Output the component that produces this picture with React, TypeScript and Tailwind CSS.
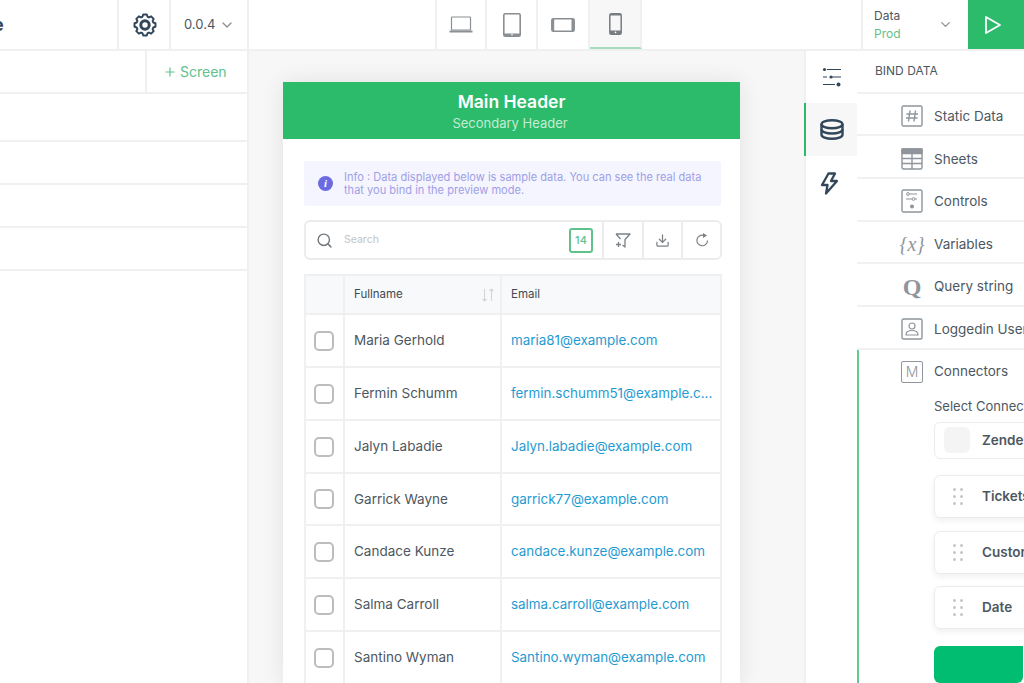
import { ChevronDown, Download, Plus, Search } from "lucide-react";
import type { ReactNode } from "react";

const font = { fontFamily: "Inter, 'Liberation Sans', sans-serif" };

const people = [
  { name: "Maria Gerhold", email: "maria81@example.com", h: "h-[53px]" },
  { name: "Fermin Schumm", email: "fermin.schumm51@example.c...", h: "h-[53px]" },
  { name: "Jalyn Labadie", email: "Jalyn.labadie@example.com", h: "h-[53px]" },
  { name: "Garrick Wayne", email: "garrick77@example.com", h: "h-[52px]" },
  { name: "Candace Kunze", email: "candace.kunze@example.com", h: "h-[53px]" },
  { name: "Salma Carroll", email: "salma.carroll@example.com", h: "h-[53px]" },
  { name: "Santino Wyman", email: "Santino.wyman@example.com", h: "h-[53px]" },
];

// 8 tooth cog outline
function gearPath() {
  const pts: string[] = [];
  for (let i = 0; i < 8; i++) {
    const a = (i * Math.PI) / 4;
    for (const [r, d] of [[8.6, -0.3], [10.6, -0.17], [10.6, 0.17], [8.6, 0.3]]) {
      pts.push(`${(12 + r * Math.cos(a + d)).toFixed(2)} ${(12 + r * Math.sin(a + d)).toFixed(2)}`);
    }
  }
  return `M${pts.join("L")}Z`;
}

function Gear() {
  return (
    <svg width="24" height="24" viewBox="0 0 24 24" fill="none" stroke="#33475b" strokeLinejoin="round">
      <path d={gearPath()} strokeWidth="2" />
      <circle cx="12" cy="12" r="4.2" strokeWidth="3" />
    </svg>
  );
}

function Laptop() {
  return (
    <svg width="24" height="20" viewBox="0 0 24 20" fill="none" stroke="#8a8f94">
      <rect x="2.5" y="2" width="19" height="13" rx="0.5" strokeWidth="1.2" />
      <path d="M0.5 16.5h23" strokeWidth="2" />
    </svg>
  );
}

function Tablet() {
  return (
    <svg width="18" height="24" viewBox="0 0 18 24" fill="none">
      <rect x="0.8" y="0.8" width="16.4" height="22.4" rx="1.5" stroke="#8a8f94" strokeWidth="1.6" />
      <path d="M1 20.5h16V23H1z" fill="#8a8f94" />
      <circle cx="9" cy="21.7" r="0.8" fill="#fff" />
    </svg>
  );
}

function Wide() {
  return (
    <svg width="24" height="14" viewBox="0 0 24 14" fill="none">
      <rect x="0.8" y="0.8" width="22.4" height="12.4" rx="1.5" stroke="#8a8f94" strokeWidth="1.5" />
      <path d="M1 1h2.2v12H1zM20.5 1H23v12h-2.5z" fill="#8a8f94" />
    </svg>
  );
}

function Phone() {
  return (
    <svg width="13" height="22" viewBox="0 0 13 22" fill="none">
      <rect x="0.8" y="0.8" width="11.4" height="20.4" rx="1.5" stroke="#777c82" strokeWidth="1.5" />
      <path d="M1 1h11v1.5H1zM1 17.5h11V21H1z" fill="#777c82" />
      <circle cx="6.5" cy="19.3" r="0.9" fill="#fff" />
    </svg>
  );
}

function Sliders() {
  return (
    <svg width="20" height="20" viewBox="0 0 20 20" fill="none" stroke="#33475b" strokeWidth="1.2">
      <path d="M5 2.5h14M1 10h4M9 10h10M1 17.5h12" />
      <circle cx="2.5" cy="2.5" r="1.6" fill="#33475b" stroke="none" />
      <circle cx="9" cy="10" r="1.6" fill="#33475b" stroke="none" />
      <circle cx="16.5" cy="17.5" r="2" fill="#33475b" stroke="none" />
    </svg>
  );
}

function Db() {
  return (
    <svg width="24" height="21" viewBox="0 0 24 21" fill="none" stroke="#33475b" strokeWidth="2.4">
      <ellipse cx="12" cy="5.2" rx="10.5" ry="4" />
      <path d="M1.5 5.2v10.6c0 2.2 4.7 4 10.5 4s10.5-1.8 10.5-4V5.2" />
      <path d="M1.5 10.5c0 2.2 4.7 4 10.5 4s10.5-1.8 10.5-4" />
    </svg>
  );
}

function Bolt() {
  return (
    <svg width="19" height="23" viewBox="0 0 19 23" fill="none" stroke="#33475b" strokeWidth="2.3" strokeLinejoin="round">
      <path d="M8.5 1.5 2 13h5.5L6 21.5 17 9h-6l4-7.5z" />
    </svg>
  );
}

function Run() {
  return (
    <svg width="18" height="20" viewBox="0 0 18 20" fill="none" stroke="#fff" strokeWidth="1.8" strokeLinejoin="round">
      <path d="M2 2v16l14-8z" />
    </svg>
  );
}

function Funnel() {
  return (
    <svg width="16" height="15" viewBox="0 0 16 15" fill="none" stroke="#7b8186" strokeWidth="1.3" strokeLinejoin="round">
      <path d="M1 1h14l-5 5.5V14L7.5 12" />
      <path d="M1 1l4.5 5" />
      <path d="M3.5 9v5M1 11.5h5" />
    </svg>
  );
}

function Refresh() {
  return (
    <svg width="14" height="14" viewBox="0 0 14 14" fill="none" stroke="#7b8186" strokeWidth="1.2">
      <path d="M8.5 2.3A5.3 5.3 0 1 0 12.5 7.5" />
      <path d="M8 0l4 2.5L8 5z" fill="#7b8186" stroke="none" />
    </svg>
  );
}

function SortArrows() {
  return (
    <svg width="14" height="14" viewBox="0 0 14 14" fill="none" stroke="#d3d5d7" strokeWidth="1.1">
      <path d="M3.5 1v12M1.5 11l2 2 2-2M10.5 13V1M8.5 3l2-2 2 2" />
    </svg>
  );
}

function HashIcon() {
  return (
    <svg width="22" height="22" viewBox="0 0 22 22" fill="none" stroke="#8f959b">
      <rect x="1" y="1" width="20" height="20" rx="1.5" strokeWidth="1.4" />
      <path d="M9 5.5 7.5 16.5M14.5 5.5 13 16.5M5.5 9H17M5 13h11.5" strokeWidth="1.4" />
    </svg>
  );
}

function SheetIcon() {
  return (
    <svg width="22" height="22" viewBox="0 0 22 22" fill="none" stroke="#8f959b" strokeWidth="1.4">
      <rect x="1" y="1" width="20" height="20" rx="1.5" />
      <path d="M1 1h20v4.5H1z" fill="#8f959b" />
      <path d="M1 10.5h20M1 15.5h20M11 5.5V21" />
    </svg>
  );
}

function ControlsIcon() {
  return (
    <svg width="22" height="24" viewBox="0 0 22 24" fill="none" stroke="#8f959b">
      <rect x="1" y="1" width="20" height="22" rx="1.5" strokeWidth="1.4" />
      <path d="M9 5h7M5 10h6M14 10h2" strokeWidth="1" />
      <circle cx="7" cy="5" r="1.4" strokeWidth="1" />
      <circle cx="12.5" cy="10" r="1.4" strokeWidth="1" />
      <circle cx="11" cy="17.5" r="2" fill="#8f959b" stroke="none" />
    </svg>
  );
}

function QIcon() {
  return (
    <div className="flex h-[22px] w-[22px] items-center justify-center text-[24px] font-bold leading-none text-[#8f959b]" style={{ fontFamily: "'Liberation Serif', serif" }}>
      Q
    </div>
  );
}

function UserIcon() {
  return (
    <svg width="22" height="22" viewBox="0 0 22 22" fill="none" stroke="#8f959b">
      <rect x="1" y="1" width="20" height="20" rx="1.5" strokeWidth="1.4" />
      <circle cx="11" cy="8" r="3" strokeWidth="1.2" />
      <path d="M5 17c0-3 2.5-4.5 6-4.5s6 1.5 6 4.5z" strokeWidth="1.2" />
    </svg>
  );
}

function ConnectorIcon() {
  return (
    <div className="flex h-[22px] w-[22px] items-center justify-center rounded-[2px] border border-[#8f959b] text-[14px] font-light text-[#8f959b]">
      M
    </div>
  );
}

function VarIcon() {
  return (
    <div className="flex h-[22px] w-[24px] items-center justify-center whitespace-nowrap text-[20px] italic leading-none text-[#8f959b]" style={{ fontFamily: "'Liberation Serif', serif" }}>
      {"{x}"}
    </div>
  );
}

function Dots() {
  return (
    <div className="grid w-[10px] grid-cols-2 gap-x-[4px] gap-y-[4px]">
      {[0, 1, 2, 3, 4, 5].map((i) => (
        <span key={i} className="h-[3px] w-[3px] rounded-full bg-[#c4c7ca]" />
      ))}
    </div>
  );
}

function DataRow({ icon, label }: { icon: ReactNode; label: string }) {
  return (
    <div className="flex h-[42.67px] items-center border-b-2 border-[#f1f1f1] pl-[44px] pt-[4px]">
      <div className="flex w-[22px] justify-center">{icon}</div>
      <span className="ml-[11px] whitespace-nowrap text-[13.5px] text-[#4d5761]">{label}</span>
    </div>
  );
}

function Field({ label }: { label: string }) {
  return (
    <div className="mt-[12.5px] flex h-[43px] w-[200px] items-center rounded-md border border-[#ececec] bg-white pl-[18px] shadow-[0_3px_6px_rgba(0,0,0,0.06)]">
      <Dots />
      <span className="ml-[19px] text-[13.5px] font-semibold text-[#4d5761]">{label}</span>
    </div>
  );
}

export default function App() {
  return (
    <div className="flex h-[683px] w-[1024px] flex-col overflow-hidden bg-white" style={font}>
      <div className="flex h-[51px] shrink-0 border-b-2 border-[#f0f0f0]">
        <div className="flex w-[119px] items-center justify-start overflow-hidden border-r-2 border-[#f0f0f0]">
          <span className="-ml-[7px] text-[18px] font-bold text-[#33475b]">e</span>
        </div>
        <div className="flex w-[52px] items-center justify-center border-r-2 border-[#f0f0f0] pl-[1px]">
          <Gear />
        </div>
        <div className="flex w-[78px] items-center border-r-2 border-[#f0f0f0] pl-[13px] text-[13px] text-[#4d5761]">
          0.0.4
          <ChevronDown size={16} className="ml-[4px] text-[#8a8f94]" />
        </div>
        <div className="w-[186px]" />
        <div className="flex">
          <div className="flex w-[52px] items-center justify-center border-x-2 border-[#f0f0f0]"><Laptop /></div>
          <div className="flex w-[51px] items-center justify-center border-r-2 border-[#f0f0f0]"><Tablet /></div>
          <div className="flex w-[52px] items-center justify-center border-r-2 border-[#f0f0f0]"><Wide /></div>
          <div className="flex w-[52px] items-center justify-center border-r-2 border-b-2 border-r-[#f0f0f0] border-b-[#a5dcbd] bg-[#f7f7f7]"><Phone /></div>
        </div>
        <div className="w-[221px] border-r-2 border-[#f0f0f0]" />
        <div className="flex w-[105px] items-center justify-between pl-[11px] pr-[15px]">
          <div className="text-[12px] leading-[18px]">
            <div className="text-[#4d5761]">Data</div>
            <div className="text-[#5fc28d]">Prod</div>
          </div>
          <ChevronDown size={15} className="text-[#8a8f94]" />
        </div>
        <div className="flex w-[56px] items-center justify-center bg-[#2bbb6b] pr-[6px]">
          <Run />
        </div>
      </div>

      <div className="flex min-h-0 flex-1">
        <div className="w-[249px] shrink-0 border-r-2 border-[#f0f0f0]">
          <div className="flex h-[43px] justify-end border-b-2 border-[#f0f0f0]">
            <div className="flex w-[102px] items-center border-l-2 border-[#f0f0f0] pl-[16px] text-[14px] text-[#5fc28d]">
              <Plus size={14} className="mr-[3px]" />
              Screen
            </div>
          </div>
          <div className="h-[48px] border-b-2 border-[#f0f0f0]" />
          <div className="h-[43px] border-b-2 border-[#f0f0f0]" />
          <div className="h-[43px] border-b-2 border-[#f0f0f0]" />
          <div className="h-[43px] border-b-2 border-[#f0f0f0]" />
        </div>

        <div className="min-w-0 flex-1 overflow-hidden bg-[#f7f7f7] pl-[34px] pt-[31px]">
          <div className="w-[457px] bg-white shadow-[0_0_22px_rgba(0,0,0,0.09)]">
            <div className="flex h-[57px] flex-col items-center justify-center bg-[#2bbb6b] pt-[2px] text-white">
              <div className="text-[17.5px] font-semibold leading-[24px]">Main Header</div>
              <div className="-mt-[1px] pr-[3px] text-[13px] leading-[20px] text-[#c4ecd4]">Secondary Header</div>
            </div>
            <div className="px-[21px] pt-[22px]">
              <div className="flex h-[45px] w-[417px] items-center rounded-[2px] bg-[#f5f5ff] pl-[14px]">
                <span className="flex h-[15px] w-[15px] shrink-0 items-center justify-center rounded-full bg-[#6a6be0] text-[11px] font-bold italic leading-none text-white" style={{ fontFamily: "'Liberation Serif', serif" }}>i</span>
                <p className="ml-[11px] whitespace-nowrap text-[11.05px] leading-[13px] text-[#a09fe6]">
                  Info : Data displayed below is sample data. You can see the real data<br />
                  that you bind in the preview mode.
                </p>
              </div>
              <div className="mt-[14px] flex h-[40px] w-[418px] items-center rounded-md border-2 border-[#ececec]">
                <Search size={17} className="ml-[10px] text-[#6f767c]" />
                <span className="ml-[11px] flex-1 text-[10.5px] text-[#c2c5c8]">Search</span>
                <span className="mr-[9px] flex h-[25px] w-[24px] items-center justify-center rounded-[3px] border-2 border-[#5fc28d] text-[11px] font-medium text-[#5fc28d]">14</span>
                <div className="flex h-full w-[40px] items-center justify-center border-l-2 border-[#ececec]"><Funnel /></div>
                <div className="flex h-full w-[39px] items-center justify-center border-l-2 border-[#ececec]"><Download size={15} className="text-[#7b8186]" /></div>
                <div className="flex h-full w-[39px] items-center justify-center border-l-2 border-[#ececec]"><Refresh /></div>
              </div>
              <div className="mt-[14px] w-[418px] border-x-2 border-t-2 border-[#f0f0f0]">
                <div className="grid h-[39px] grid-cols-[39px_157px_1fr] border-b-2 border-[#f0f0f0] bg-[#f8f9fa] text-[11.5px] text-[#3f4953]">
                  <div className="border-r-2 border-[#f0f0f0]" />
                  <div className="flex items-center justify-between border-r-2 border-[#f0f0f0] pl-[9px] pr-[5px]">
                    Fullname
                    <SortArrows />
                  </div>
                  <div className="flex items-center pl-[9px]">Email</div>
                </div>
                {people.map((p) => (
                  <div key={p.name} className={`grid ${p.h} grid-cols-[39px_157px_1fr] border-b-2 border-[#f0f0f0]`}>
                    <div className="flex items-center justify-center border-r-2 border-[#f0f0f0] pr-[2px]">
                      <span className="h-[20px] w-[20px] rounded-[5px] border-2 border-[#bdbdbd]" />
                    </div>
                    <div className="flex items-center border-r-2 border-[#f0f0f0] pl-[9px] text-[13.5px] text-[#4d5761]">{p.name}</div>
                    <div className="flex items-center whitespace-nowrap pl-[9px] text-[13.4px] text-[#1f9bd1]">{p.email}</div>
                  </div>
                ))}
              </div>
            </div>
          </div>
        </div>

        <div className="flex w-[53px] shrink-0 flex-col">
          <div className="flex h-[52px] items-center justify-center border-l-2 border-[#f0f0f0]"><Sliders /></div>
          <div className="flex h-[53px] items-center justify-center border-l-2 border-[#2bbb6b] bg-[#f7f7f7]">
            <Db />
          </div>
          <div className="flex h-[54px] items-center justify-center border-l-2 border-[#f0f0f0] pr-[4px]">
            <Bolt />
          </div>
          <div className="flex-1 border-l-2 border-[#f0f0f0]" />
        </div>

        <div className="w-[167px] shrink-0 overflow-hidden">
          <div className="flex h-[42.67px] items-center border-b-2 border-[#f1f1f1] pl-[18px] text-[12px] text-[#4d5761]">BIND DATA</div>
          <DataRow icon={<HashIcon />} label="Static Data" />
          <DataRow icon={<SheetIcon />} label="Sheets" />
          <DataRow icon={<ControlsIcon />} label="Controls" />
          <DataRow icon={<VarIcon />} label="Variables" />
          <DataRow icon={<QIcon />} label="Query string" />
          <DataRow icon={<UserIcon />} label="Loggedin User" />
          <div className="h-[400px] border-l-2 border-[#5fc98f]">
            <div className="flex h-[44px] items-center pl-[42px]">
              <ConnectorIcon />
              <span className="ml-[11px] text-[13.5px] text-[#4d5761]">Connectors</span>
            </div>
            <div className="pl-[75px]">
              <div className="mt-[3px] whitespace-nowrap text-[13px] leading-[18px] text-[#4d5761]">Select Connector</div>
              <div className="mt-[7px] flex h-[37px] w-[200px] items-center rounded-md border border-[#ececec] pl-[9px]">
                <span className="h-[26px] w-[26px] rounded-md bg-[#f4f4f4]" />
                <span className="ml-[12px] text-[13.5px] font-semibold text-[#4d5761]">Zendesk</span>
              </div>
              <div className="pt-[4px]">
                <Field label="Tickets" />
                <Field label="Customers" />
                <Field label="Date" />
              </div>
              <div className="mt-[17px] h-[37px] w-[89px] rounded-[6px] rounded-tr-none bg-[#00bd71]" />
            </div>
          </div>
        </div>
      </div>
    </div>
  );
}
